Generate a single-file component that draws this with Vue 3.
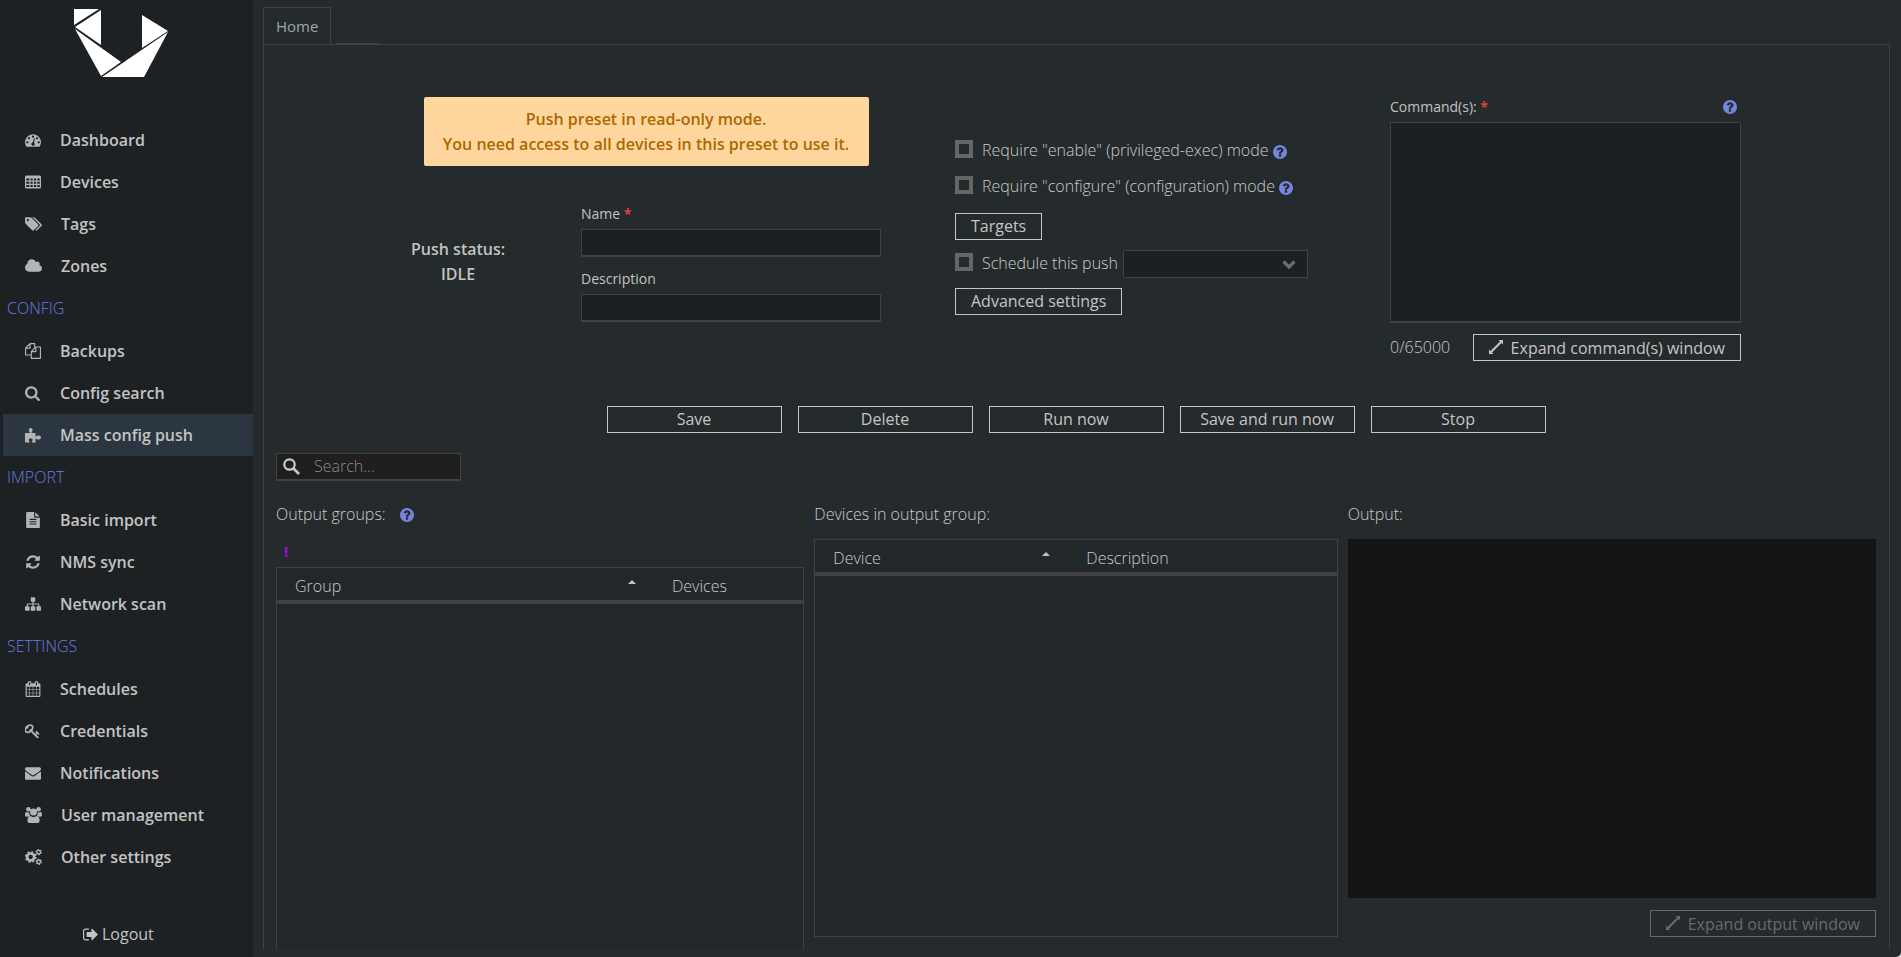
<script setup>
import { ref } from 'vue'

const icons = {
  dashboard: { box: '0 0 1792 1792', d: 'M384 1152q0-53-37.5-90.5t-90.5-37.5-90.5 37.5-37.5 90.5 37.5 90.5 90.5 37.5 90.5-37.5 37.5-90.5zm192-448q0-53-37.5-90.5t-90.5-37.5-90.5 37.5-37.5 90.5 37.5 90.5 90.5 37.5 90.5-37.5 37.5-90.5zm428 481l101-382q6-26-7.5-48.5t-38.5-29.5-48 6.5-30 39.5l-101 382q-60 5-107 43.5t-63 98.5q-20 77 20 146t117 89 146-20 89-117q16-60-6-117t-72-91zm660-33q0-53-37.5-90.5t-90.5-37.5-90.5 37.5-37.5 90.5 37.5 90.5 90.5 37.5 90.5-37.5 37.5-90.5zm-640-640q0-53-37.5-90.5t-90.5-37.5-90.5 37.5-37.5 90.5 37.5 90.5 90.5 37.5 90.5-37.5 37.5-90.5zm448 192q0-53-37.5-90.5t-90.5-37.5-90.5 37.5-37.5 90.5 37.5 90.5 90.5 37.5 90.5-37.5 37.5-90.5zm320 448q0 261-141 483-19 29-54 29h-1402q-35 0-54-29-141-221-141-483 0-182 71-348t191-286 286-191 348-71 348 71 286 191 191 286 71 348z' },
  table: { box: '0 0 16 16', d: 'M1.5 1.5h13a1.5 1.5 0 0 1 1.500 1.500v10a1.500 1.500 0 0 1-1.500 1.500h-13a1.500 1.500 0 0 1-1.500-1.500v-10a1.500 1.500 0 0 1 1.500-1.500zM1.300 4.500v2h3v-2zm4.200 0v2h2.200v-2zm3.400 0v2h2.200v-2zm3.400 0v2h2.500v-2zM1.300 7.700v2h3v-2zm4.200 0v2h2.200v-2zm3.400 0v2h2.200v-2zm3.400 0v2h2.500v-2zM1.300 11v2h3v-2zm4.200 0v2h2.200v-2zm3.400 0v2h2.200v-2zm3.400 0v2h2.500v-2z' },
  tags: { wide: true, box: '128 0 1920 1792', d: 'M576 448q0-53-37.5-90.5t-90.5-37.5-90.5 37.5-37.5 90.5 37.5 90.5 90.5 37.5 90.5-37.5 37.5-90.5zm1067 576q0 53-37 90l-491 492q-39 37-91 37-53 0-90-37l-715-716q-38-37-64.500-101t-26.500-117v-416q0-52 38-90t90-38h416q53 0 117 26.500t102 64.500l715 714q37 39 37 91zm384 0q0 53-37 90l-491 492q-39 37-91 37-36 0-59-14t-53-45l470-470q37-37 37-90 0-52-37-91l-715-714q-38-38-102-64.500t-117-26.500h224q53 0 117 26.500t102 64.500l715 714q37 39 37 91z' },
  cloud: { wide: true, box: '64 0 1920 1792', d: 'M1984 1152q0 159-112.500 271.500t-271.500 112.500h-1088q-185 0-316.500-131.500t-131.500-316.500q0-132 71-241.500t187-163.500q-2-28-2-43 0-212 150-362t362-150q158 0 286.500 88t187.500 230q70-62 166-62 106 0 181 75t75 181q0 75-41 138 129 30 213 134.500t84 239.500z' },
  files: { box: '0 0 1792 1792', d: 'M1696 384q40 0 68 28t28 68v1216q0 40-28 68t-68 28h-960q-40 0-68-28t-28-68v-288h-544q-40 0-68-28t-28-68v-672q0-40 20-88t48-76l408-408q28-28 76-48t88-20h416q40 0 68 28t28 68v328q68-40 128-40h416zm-544 213l-299 299h299v-299zm-640-384l-299 299h299v-299zm196 647l316-316v-416h-384v416q0 40-28 68t-68 28h-416v640h512v-256q0-40 20-88t48-76zm956 804v-1152h-384v416q0 40-28 68t-68 28h-416v640h896z' },
  search: { box: '64 0 1792 1792', d: 'M1216 832q0-185-131.500-316.500t-316.500-131.500-316.500 131.500-131.500 316.500 131.500 316.500 316.500 131.500 316.500-131.500 131.500-316.500zm512 832q0 52-38 90t-90 38q-54 0-90-38l-343-342q-179 124-399 124-143 0-273.500-55.500t-225-150-150-225-55.500-273.500 55.500-273.500 150-225 225-150 273.500-55.500 273.500 55.500 225 150 150 225 55.500 273.500q0 220-124 399l343 343q37 37 37 90z' },
  puzzle: { box: '0 0 16 16', d: 'M0 6h4.600c.3 0 .5-.3.300-.6C4.600 5 3.800 4.300 3.800 3a1.900 1.900 0 0 1 3.800 0c0 1.300-.8 2-1.100 2.400-.2.300 0 .6.300.6H10.500v3c0 .5.300.7.700.5.500-.3 1.100-.9 2.300-.9 1.500 0 2.500.9 2.500 2s-1 2-2.500 2c-1.200 0-1.800-.6-2.300-.9-.4-.2-.7 0-.7.500V15.500H7.200c-.4 0-.6-.3-.4-.7.300-.5.800-.9.800-1.800 0-1-.8-1.700-1.900-1.700s-1.900.7-1.900 1.700c0 .9.500 1.300.8 1.800.2.400 0 .7-.4.700H0z' },
  file: { box: '0 0 1792 1792', d: 'M1596 476q14 14 28 36h-472v-472q22 14 36 28zm-476 164h544v1056q0 40-28 68t-68 28h-1344q-40 0-68-28t-28-68v-1600q0-40 28-68t68-28h800v544q0 40 28 68t68 28zm160 736v-64q0-14-9-23t-23-9h-704q-14 0-23 9t-9 23v64q0 14 9 23t23 9h704q14 0 23-9t9-23zm0-256v-64q0-14-9-23t-23-9h-704q-14 0-23 9t-9 23v64q0 14 9 23t23 9h704q14 0 23-9t9-23zm0-256v-64q0-14-9-23t-23-9h-704q-14 0-23 9t-9 23v64q0 14 9 23t23 9h704q14 0 23-9t9-23z' },
  refresh: { box: '0 0 1792 1792', d: 'M1639 1056q0 5-1 7-64 268-268 434.500t-478 166.500q-146 0-282.500-55t-243.500-157l-129 129q-19 19-45 19t-45-19-19-45v-448q0-26 19-45t45-19h448q26 0 45 19t19 45-19 45l-137 137q71 66 161 102t187 36q134 0 250-65t186-179q11-17 53-117 8-23 30-23h192q13 0 22.500 9.500t9.500 22.500zm25-800v448q0 26-19 45t-45 19h-448q-26 0-45-19t-19-45 19-45l138-138q-148-137-349-137-134 0-250 65t-186 179q-11 17-53 117-8 23-30 23h-199q-13 0-22.500-9.500t-9.500-22.500v-7q65-268 270-434.500t480-166.500q146 0 284 55.500t245 156.500l130-129q19-19 45-19t45 19 19 45z' },
  sitemap: { box: '0 0 1792 1792', d: 'M1792 1248v320q0 40-28 68t-68 28h-320q-40 0-68-28t-28-68v-320q0-40 28-68t68-28h96v-192h-512v192h96q40 0 68 28t28 68v320q0 40-28 68t-68 28h-320q-40 0-68-28t-28-68v-320q0-40 28-68t68-28h96v-192h-512v192h96q40 0 68 28t28 68v320q0 40-28 68t-68 28h-320q-40 0-68-28t-28-68v-320q0-40 28-68t68-28h96v-192q0-52 38-90t90-38h512v-192h-96q-40 0-68-28t-28-68v-320q0-40 28-68t68-28h320q40 0 68 28t28 68v320q0 40-28 68t-68 28h-96v192h512q52 0 90 38t38 90v192h96q40 0 68 28t28 68z' },
  calendar: { box: '0 0 1792 1792', d: 'M192 1664h288v-288h-288v288zm352 0h320v-288h-320v288zm-352-352h288v-320h-288v320zm352 0h320v-320h-320v320zm-352-384h288v-288h-288v288zm736 736h320v-288h-320v288zm-384-736h320v-288h-320v288zm768 736h288v-288h-288v288zm-384-352h320v-320h-320v320zm-352-864v-288q0-13-9.500-22.500t-22.500-9.500h-64q-13 0-22.500 9.500t-9.500 22.500v288q0 13 9.500 22.500t22.500 9.500h64q13 0 22.500-9.500t9.500-22.500zm736 864h288v-320h-288v320zm-384-384h320v-288h-320v288zm384 0h288v-288h-288v288zm32-480v-288q0-13-9.500-22.500t-22.500-9.500h-64q-13 0-22.500 9.500t-9.500 22.500v288q0 13 9.500 22.500t22.500 9.500h64q13 0 22.500-9.500t9.500-22.500zm384-64v1280q0 52-38 90t-90 38h-1408q-52 0-90-38t-38-90v-1280q0-52 38-90t90-38h128v-96q0-66 47-113t113-47h64q66 0 113 47t47 113v96h384v-96q0-66 47-113t113-47h64q66 0 113 47t47 113v96h128q52 0 90 38t38 90z' },
  key: { box: '64 0 1792 1792', d: 'M832 512q0-80-56-136t-136-56-136 56-56 136q0 42 19 83-41-19-83-19-80 0-136 56t-56 136 56 136 136 56 136-56 56-136q0-42-19-83 41 19 83 19 80 0 136-56t56-136zm851 704q0 17-49 66t-66 49q-9 0-28.500-16t-36.500-33-38.500-40-24.500-26l-96 96 220 220q28 28 28 68 0 42-39 81t-81 39q-40 0-68-28l-671-671q-176 131-365 131-163 0-265.500-102.500t-102.500-265.500q0-160 95-313t248-248 313-95q163 0 265.500 102.500t102.500 265.500q0 189-131 365l355 355 96-96q-3-3-26-24.500t-40-38.500-33-36.500-16-28.500q0-17 49-66t66-49q13 0 23 10 6 6 46 44.500t82 79.500 86.500 86 73 78 28.500 41z' },
  envelope: { box: '0 0 1792 1792', d: 'M1792 710v794q0 66-47 113t-113 47h-1472q-66 0-113-47t-47-113v-794q44 49 101 87 362 246 497 345 57 42 92.500 65.500t94.500 48 110 24.500h2q51 0 110-24.500t94.500-48 92.500-65.500q170-123 498-345 57-39 100-87zm0-294q0 79-49 151t-122 123q-376 261-468 325-10 7-42.500 31t-54 38.500-52 32.500-57.500 27-50 9h-2q-23 0-50-9t-57.500-27-52-32.500-54-38.500-42.500-31q-91-64-262-182.500t-205-142.500q-62-42-117-115.500t-55-136.500q0-78 41.500-130t118.500-52h1472q65 0 112.500 47t47.500 113z' },
  users: { wide: true, box: '0 0 17 16', d: 'M3.400 0a2.300 2.300 0 1 1 0 4.600a2.300 2.300 0 0 1 0-4.600zM13.600 0a2.300 2.300 0 1 1 0 4.600a2.300 2.300 0 0 1 0-4.600zM8.500 1.600a3.500 3.500 0 1 1 0 7a3.500 3.500 0 0 1 0-7zM1.600 5c1.300.8 1.800.7 2.700.3-.2 1.500.2 2.700 1 3.500-1 .1-1.800.4-2.400.9H1.700C.6 9.700 0 9 0 8c0-1.300.3-3.300 1.600-3zM15.400 5c-1.300.8-1.800.7-2.700.3.200 1.500-.2 2.700-1 3.500 1 .1 1.800.4 2.400.9h1.200c1.100 0 1.700-.7 1.700-1.700 0-1.300-.3-3.300-1.600-3zM5.400 9.100c2 1.500 4.200 1.500 6.200 0 2 0 3 2 3 4.700 0 1.300-.9 2.200-2.200 2.200H4.600c-1.300 0-2.200-.9-2.200-2.200 0-2.700 1-4.700 3-4.700z' },
  cogs: { wide: true, box: '0 0 17 16', gears: true },
}

const sections = [
  { title: '', items: [
    { label: 'Dashboard', icon: 'dashboard' },
    { label: 'Devices', icon: 'table' },
    { label: 'Tags', icon: 'tags' },
    { label: 'Zones', icon: 'cloud' },
  ] },
  { title: 'CONFIG', items: [
    { label: 'Backups', icon: 'files' },
    { label: 'Config search', icon: 'search' },
    { label: 'Mass config push', icon: 'puzzle', active: true },
  ] },
  { title: 'IMPORT', items: [
    { label: 'Basic import', icon: 'file' },
    { label: 'NMS sync', icon: 'refresh' },
    { label: 'Network scan', icon: 'sitemap' },
  ] },
  { title: 'SETTINGS', items: [
    { label: 'Schedules', icon: 'calendar' },
    { label: 'Credentials', icon: 'key' },
    { label: 'Notifications', icon: 'envelope' },
    { label: 'User management', icon: 'users' },
    { label: 'Other settings', icon: 'cogs' },
  ] },
]

const actions = ['Save', 'Delete', 'Run now', 'Save and run now', 'Stop']

const helpPath = 'M1024 1376v-192q0-14-9-23t-23-9h-192q-14 0-23 9t-9 23v192q0 14 9 23t23 9h192q14 0 23-9t9-23zm256-672q0-88-55.500-163t-138.500-116-170-41q-243 0-371 213-15 24 8 42l132 100q7 6 19 6 16 0 25-12 53-68 86-92 34-24 86-24 48 0 85.500 26t37.500 59q0 38-20 61t-68 45q-63 28-115.500 86.500t-52.500 125.500v36q0 14 9 23t23 9h192q14 0 23-9t9-23q0-19 21.500-49.500t54.500-49.500q32-18 49-28.500t46-35 44.500-48 28-60.500 12.500-81zm384 192q0 209-103 385.500t-279.500 279.500-385.500 103-385.500-103-279.500-279.500-103-385.500 103-385.500 279.500-279.500 385.500-103 385.500 103 279.500 279.500 103 385.500z'

const name = ref('')
const description = ref('')
const commands = ref('')
const query = ref('')
const enableMode = ref(false)
const configureMode = ref(false)
const scheduled = ref(false)
</script>

<template>
  <div class="app">
    <aside class="sidebar">
      <svg class="logo" viewBox="0 0 95 69" aria-hidden="true">
        <g fill="#fff">
          <path d="M0 0H25L0 16z" />
          <path d="M27 1V36L1 18z" />
          <path d="M1 20L47 53L27 67z" />
          <path d="M94 23L70 68H28z" />
          <path d="M68 6L94 22L68 39z" />
        </g>
      </svg>
      <nav class="nav">
        <template v-for="section in sections" :key="section.title">
          <h2 v-if="section.title" class="nav-title">{{ section.title }}</h2>
          <a
            v-for="item in section.items"
            :key="item.label"
            href="#"
            class="nav-item"
            :class="{ active: item.active }"
          >
            <svg class="nav-icon" :class="{ wide: icons[item.icon].wide }" :viewBox="icons[item.icon].box" aria-hidden="true">
              <g v-if="icons[item.icon].gears" fill="none" stroke="currentColor">
                <circle cx="5.700" cy="8" r="3.500" stroke-width="2.700" />
                <circle cx="5.700" cy="8" r="5" stroke-width="1.700" stroke-dasharray="2.050 1.877" />
                <circle cx="13.700" cy="3.200" r="1.800" stroke-width="1.300" />
                <circle cx="13.700" cy="3.200" r="2.700" stroke-width="1.200" stroke-dasharray="1.414 1.414" />
                <circle cx="13.700" cy="12.800" r="1.800" stroke-width="1.300" />
                <circle cx="13.700" cy="12.800" r="2.700" stroke-width="1.200" stroke-dasharray="1.414 1.414" />
              </g>
              <path v-else :d="icons[item.icon].d" fill="currentColor" fill-rule="evenodd" />
            </svg>
            <span>{{ item.label }}</span>
          </a>
        </template>
      </nav>
      <a href="#" class="logout">
        <svg class="logout-icon" viewBox="64 128 1600 1536" aria-hidden="true">
          <path fill="currentColor" d="M704 1440q0 4 1 20t.5 26.500-3 23.500-10 19.500-20.500 6.500h-320q-119 0-203.500-84.500t-84.500-203.500v-704q0-119 84.500-203.500t203.500-84.500h320q13 0 22.500 9.500t9.500 22.500q0 4 1 20t.5 26.500-3 23.500-10 19.500-20.500 6.500h-320q-66 0-113 47t-47 113v704q0 66 47 113t113 47h312l11.500 1 11.500 3 8 5.500 7 9 2 13.500zm928-544q0 26-19 45l-544 544q-19 19-45 19t-45-19-19-45v-288h-448q-26 0-45-19t-19-45v-384q0-26 19-45t45-19h448v-288q0-26 19-45t45-19 45 19l544 544q19 19 19 45z" />
        </svg>
        <span>Logout</span>
      </a>
    </aside>

    <main class="main">
      <div class="tabs" role="tablist">
        <button type="button" role="tab" aria-selected="true" class="tab">Home</button>
        <span class="tab-stub"></span>
      </div>

      <section class="panel">
        <form class="form" @submit.prevent>
          <div class="identity">
            <p class="banner">Push preset in read-only mode.<br />You need access to all devices in this preset to use it.</p>
            <div class="identity-row">
              <p class="status">Push status:<br />IDLE</p>
              <div class="fields">
                <label class="caption" for="name">Name <b class="required">*</b></label>
                <input id="name" v-model="name" class="field" type="text" />
                <label class="caption" for="description">Description</label>
                <input id="description" v-model="description" class="field" type="text" />
              </div>
            </div>
          </div>

          <div class="options">
            <div class="check-row">
              <input id="enable" v-model="enableMode" class="check" type="checkbox" />
              <label for="enable">Require "enable" (privileged-exec) mode</label>
              <svg class="help low" viewBox="128 128 1536 1536" aria-hidden="true"><path :d="helpPath" /></svg>
            </div>
            <div class="check-row">
              <input id="configure" v-model="configureMode" class="check" type="checkbox" />
              <label for="configure">Require "configure" (configuration) mode</label>
              <svg class="help low" viewBox="128 128 1536 1536" aria-hidden="true"><path :d="helpPath" /></svg>
            </div>
            <button type="button" class="button targets">Targets</button>
            <div class="schedule-row">
              <input id="schedule" v-model="scheduled" class="check" type="checkbox" />
              <label for="schedule">Schedule this push</label>
              <div class="select-wrap">
                <select class="select" aria-label="Schedule"><option></option></select>
                <svg class="chevron" viewBox="0 0 14 10" aria-hidden="true">
                  <path d="M1.500 1.500L7 7L12.500 1.500" fill="none" stroke="#696e72" stroke-width="3.200" />
                </svg>
              </div>
            </div>
            <button type="button" class="button">Advanced settings</button>
          </div>

          <div class="commands">
            <div class="commands-head">
              <label class="caption" for="commands">Command(s): <b class="required">*</b></label>
              <svg class="help" viewBox="128 128 1536 1536" aria-hidden="true"><path :d="helpPath" /></svg>
            </div>
            <textarea id="commands" v-model="commands" class="textarea"></textarea>
            <div class="commands-foot">
              <span>{{ commands.length }}/65000</span>
              <button type="button" class="button expander">
                <svg class="expand" viewBox="0 0 14 14" aria-hidden="true">
                  <path d="M2 12L12 2" stroke="currentColor" stroke-width="2.200" />
                  <path d="M9.500 0H14V4.500zM0 9.500V14H4.500z" fill="currentColor" />
                </svg>
                <span>Expand command(s) window</span>
              </button>
            </div>
          </div>
        </form>

        <div class="actions">
          <button v-for="action in actions" :key="action" type="button" class="button action">{{ action }}</button>
        </div>

        <div class="search">
          <svg class="search-icon" viewBox="0 0 17 17" aria-hidden="true">
            <circle cx="6.500" cy="6.500" r="5.200" fill="none" stroke="currentColor" stroke-width="2.200" />
            <path d="M10.500 10.500L16 16" stroke="currentColor" stroke-width="2.600" />
          </svg>
          <input v-model="query" class="search-input" type="text" placeholder="Search..." aria-label="Search" />
        </div>

        <div class="results">
          <section class="result">
            <h3 class="result-title">
              <span>Output groups:</span>
              <svg class="help" viewBox="128 128 1536 1536" aria-hidden="true"><path :d="helpPath" /></svg>
            </h3>
            <p class="alert">!</p>
            <div class="grid open">
              <table class="table">
                <colgroup><col class="group-col" /><col /></colgroup>
                <thead>
                  <tr>
                    <th><div class="sorted"><span>Group</span><i class="caret"></i></div></th>
                    <th>Devices</th>
                  </tr>
                </thead>
              </table>
            </div>
          </section>

          <section class="result padded">
            <h3 class="result-title">Devices in output group:</h3>
            <div class="grid">
              <table class="table">
                <colgroup><col class="device-col" /><col /></colgroup>
                <thead>
                  <tr>
                    <th><div class="sorted"><span>Device</span><i class="caret"></i></div></th>
                    <th>Description</th>
                  </tr>
                </thead>
              </table>
            </div>
          </section>

          <section class="result padded">
            <h3 class="result-title">Output:</h3>
            <div class="output"></div>
            <button type="button" class="button expander output-button" disabled>
              <svg class="expand" viewBox="0 0 14 14" aria-hidden="true">
                <path d="M2 12L12 2" stroke="currentColor" stroke-width="2.200" />
                <path d="M9.500 0H14V4.500zM0 9.500V14H4.500z" fill="currentColor" />
              </svg>
              <span>Expand output window</span>
            </button>
          </section>
        </div>
      </section>
    </main>
  </div>
</template>

<style>
body {
  background: #e4e4e4;
}
</style>

<style scoped>
* {
  box-sizing: border-box;
}

.app {
  display: flex;
  min-height: 100vh;
  border-radius: 0 0 5px 0;
  background: #252a2d;
  color: #cacaca;
  font: 300 16px/25px "Open Sans", "Noto Sans", sans-serif;
}

p,
h2,
h3 {
  margin: 0;
}

button,
input,
select,
textarea {
  font: inherit;
  color: inherit;
  border-radius: 0;
  outline: none;
}

/* Sidebar */
.sidebar {
  display: flex;
  flex-direction: column;
  flex: none;
  width: 253px;
  padding-bottom: 10px;
  background: #1d2123;
}

.logo {
  width: 95px;
  height: 69px;
  margin: 9px 0 41px 74px;
}

.nav {
  display: flex;
  flex-direction: column;
}

.nav-title {
  height: 43px;
  padding-left: 7px;
  color: #677cdf;
  font-size: 16px;
  font-weight: 300;
  line-height: 42px;
}

.nav-item {
  display: flex;
  align-items: center;
  gap: 19px;
  height: 42px;
  margin-left: 3px;
  padding-left: 22px;
  color: #c3c3c3;
  font-weight: 600;
  text-decoration: none;
}

.nav-item.active {
  background: #2c3641;
}

.nav-icon {
  width: 16px;
  height: 16px;
  color: #b4b4b4;
}

.nav-icon.wide {
  width: 17px;
}

.logout {
  display: flex;
  align-items: center;
  gap: 4px;
  margin-top: auto;
  padding-left: 83px;
  color: #c3c3c3;
  font-weight: 400;
  text-decoration: none;
}

.logout-icon {
  width: 15px;
  height: 15px;
}

/* Main area */
.main {
  display: flex;
  flex: 1;
  flex-direction: column;
  min-width: 0;
  padding: 7px 11px 8px 10px;
}

.tabs {
  display: flex;
  align-items: flex-end;
  gap: 5px;
}

.tab {
  height: 37px;
  padding: 0 12px;
  border: 1px solid #414143;
  border-bottom: 0;
  background: none;
  color: #9ca7aa;
  font-size: 15px;
  font-weight: 400;
}

.tab-stub {
  width: 44px;
  height: 1px;
  background: #414143;
}

.panel {
  display: flex;
  flex: 1;
  flex-direction: column;
  padding: 52px 13px 0 12px;
  border: 1px solid #414143;
  border-bottom: 0;
}

.form {
  display: grid;
  grid-template-columns: 470px 361px 351px;
  gap: 74px;
  justify-content: center;
}

.banner {
  width: 445px;
  margin: 0 auto;
  padding: 10px 12px 9px;
  border-radius: 2px;
  background: #ffd79e;
  color: #ad6800;
  font-weight: 600;
  text-align: center;
}

.identity-row {
  display: flex;
  align-items: center;
  justify-content: space-between;
  margin-top: 36px;
}

.status {
  color: #c3c3c3;
  font-weight: 600;
  text-align: center;
}

.fields {
  display: flex;
  flex-direction: column;
  width: 300px;
}

.caption {
  color: #c3c3c3;
  font-size: 14px;
  font-weight: 400;
}

.fields .caption {
  height: 27px;
  line-height: 24px;
}

.required {
  color: #ee473a;
  font-weight: 600;
}

.field {
  height: 28px;
  border: 1px solid #414143;
  border-bottom-width: 2px;
  background: #1b2022;
}

.field + .caption {
  margin-top: 10px;
}

.options {
  display: flex;
  flex-direction: column;
  align-items: flex-start;
  padding-top: 35px;
}

.check-row {
  display: flex;
  align-items: center;
  height: 36px;
}

.check {
  appearance: none;
  width: 18px;
  height: 18px;
  margin: 0 9px 2px 0;
  border: 4px solid #666;
  background: #252a2d;
}

.check:checked {
  background: #7180d0;
}

.help {
  flex: none;
  width: 14px;
  height: 14px;
  fill: #7585dc;
}

.help.low {
  margin: 4px 0 0 4px;
}

.button {
  display: inline-flex;
  align-items: center;
  justify-content: center;
  height: 27px;
  padding: 0 15px;
  border: 1px solid #c5c5c5;
  background: none;
  color: #c5c5c5;
  font-weight: 400;
}

.targets {
  margin-top: 9px;
}

.schedule-row {
  display: flex;
  align-items: center;
  margin: 10px 0;
}

.select-wrap {
  position: relative;
  width: 185px;
  height: 28px;
  margin-left: 5px;
}

.schedule-row label {
  padding-bottom: 2px;
}

.schedule-row .check {
  margin-bottom: 4px;
}

.select {
  display: block;
  appearance: none;
  width: 100%;
  height: 100%;
  padding: 0 30px 0 8px;
  border: 1px solid #414143;
  background: #1b2022;
}

.chevron {
  position: absolute;
  top: 10px;
  right: 12px;
  width: 14px;
  height: 10px;
  pointer-events: none;
}

.commands-head {
  display: flex;
  align-items: center;
  justify-content: space-between;
  height: 25px;
  margin-top: -3px;
  padding-right: 4px;
}

.textarea {
  display: block;
  width: 100%;
  height: 201px;
  margin-top: 3px;
  border: 1px solid #414143;
  border-bottom-width: 2px;
  background: #1b2022;
  resize: none;
}

.commands-foot {
  display: flex;
  align-items: center;
  justify-content: space-between;
  margin-top: 11px;
}

.expander {
  padding-top: 1px;
}

.expand {
  flex: none;
  width: 14px;
  height: 14px;
  margin: 0 8px 2px 0;
}

.actions {
  display: flex;
  justify-content: center;
  gap: 16px;
  margin-top: 45px;
}

.action {
  width: 175px;
}

.search {
  display: flex;
  align-items: center;
  width: 185px;
  height: 28px;
  margin-top: 20px;
  border: 1px solid #414143;
  border-bottom-width: 2px;
  background: #201f1f;
}

.search-icon {
  flex: none;
  width: 17px;
  height: 17px;
  margin: 0 14px 0 6px;
}

.search-input {
  flex: 1;
  min-width: 0;
  padding: 0;
  border: 0;
  background: none;
}

.search-input::placeholder {
  color: #8a8a8a;
  opacity: 1;
}

/* Results */
.results {
  display: grid;
  flex: 1;
  grid-template-columns: 528fr 523fr 528fr;
  gap: 10px;
  margin-top: 21px;
}

.result {
  display: flex;
  flex-direction: column;
}

.result.padded {
  padding-bottom: 12px;
}

.result-title {
  display: flex;
  align-items: center;
  gap: 14px;
  height: 25px;
  margin-bottom: 12px;
  font-size: 16px;
  font-weight: 300;
}

.alert {
  padding-left: 8px;
  margin-bottom: 3px;
  color: #b400ff;
  font-size: 14px;
  font-weight: 700;
}

.grid {
  flex: 1;
  border: 1px solid #414143;
  background: #22272a;
}

.grid.open {
  border-bottom: 0;
}

.table {
  width: 100%;
  border-collapse: separate;
  border-spacing: 0;
  table-layout: fixed;
}

.table th {
  height: 36px;
  padding: 6px 18px 1px;
  border-bottom: 4px solid #414143;
  font-weight: 300;
  text-align: left;
}

.group-col {
  width: 377px;
}

.device-col {
  width: 253px;
}

.sorted {
  display: flex;
  justify-content: space-between;
}

.caret {
  align-self: flex-start;
  margin-top: 6px;
  border: 4px solid transparent;
  border-top: 0;
  border-bottom-color: #c3c3c3;
}

.output {
  flex: 1;
  background: #141414;
}

.output-button {
  align-self: flex-end;
  margin-top: 12px;
}

.button:disabled {
  border-color: #686a6c;
  color: #686a6c;
}
</style>
